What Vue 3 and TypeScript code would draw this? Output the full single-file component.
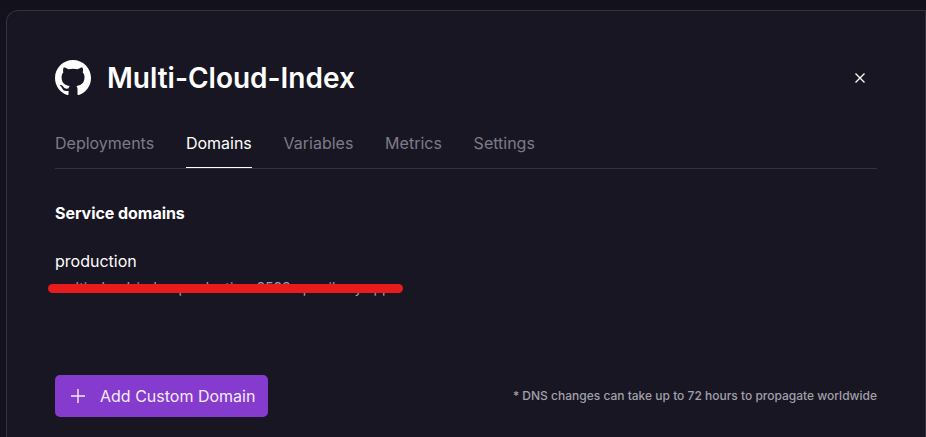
<script setup lang="ts">
import { ref } from 'vue'

const tabs: string[] = ['Deployments', 'Domains', 'Variables', 'Metrics', 'Settings']
const activeTab = ref('Domains')
const domain = 'multi-cloud-index-production-8523.up.railway.app'
</script>

<template>
  <main class="panel">
    <header class="header">
      <svg class="logo" viewBox="0 0 16 16" aria-hidden="true">
        <path fill="currentColor" fill-rule="evenodd" d="M8 0C3.58 0 0 3.58 0 8c0 3.54 2.29 6.53 5.47 7.59.4.07.55-.17.55-.38 0-.19-.01-.82-.01-1.49-2.01.37-2.53-.49-2.69-.94-.09-.23-.48-.94-.82-1.13-.28-.15-.68-.52-.01-.53.63-.01 1.08.58 1.23.82.72 1.21 1.87.87 2.33.66.07-.52.28-.87.51-1.07-1.78-.2-3.64-.89-3.64-3.95 0-.87.31-1.59.82-2.15-.08-.2-.36-1.02.08-2.12 0 0 .67-.21 2.2.82.64-.18 1.32-.27 2-.27s1.36.09 2 .27c1.53-1.04 2.2-.82 2.2-.82.44 1.1.16 1.92.08 2.12.51.56.82 1.27.82 2.15 0 3.07-1.87 3.75-3.65 3.95.29.25.54.73.54 1.48 0 1.07-.01 1.93-.01 2.2 0 .21.15.46.55.38A8.01 8.01 0 0 0 16 8c0-4.42-3.58-8-8-8z" />
      </svg>
      <h1>Multi-Cloud-Index</h1>
      <button class="close" aria-label="Close">
        <svg viewBox="0 0 10 10"><path d="M.5.5l9 9M9.5.5l-9 9" /></svg>
      </button>
    </header>

    <nav class="tabs">
      <button
        v-for="tab in tabs"
        :key="tab"
        class="tab"
        :class="{ active: tab === activeTab }"
        @click="activeTab = tab"
      >{{ tab }}</button>
    </nav>

    <h2>Service domains</h2>
    <p class="environment">production</p>
    <div class="domain">
      <span>{{ domain }}</span>
      <i class="redaction"></i>
    </div>

    <footer class="footer">
      <button class="add">
        <svg viewBox="0 0 14 14"><path d="M7 0v14M0 7h14" /></svg>
        <span>Add Custom Domain</span>
      </button>
      <p class="note">* DNS changes can take up to 72 hours to propagate worldwide</p>
    </footer>
  </main>
</template>

<style>
body {
  background: #13111c;
}
</style>

<style scoped>
.panel {
  box-sizing: border-box;
  width: 920px;
  height: 427px;
  margin: 10px 0 0 6px;
  padding: 47px 48px 0;
  border: 1px solid #33323e;
  border-bottom: 0;
  border-radius: 12px 0 0 0;
  background: #181622;
  color: #fff;
  font-family: Inter, "Liberation Sans", sans-serif;
  font-size: 16px;
  line-height: 24px;
}
h1, h2, p {
  margin: 0;
}
button {
  padding: 0;
  border: 0;
  background: none;
  color: inherit;
  font: inherit;
}
.header {
  display: flex;
  align-items: center;
  height: 40px;
}
.logo {
  width: 36px;
  height: 36px;
}
h1 {
  margin-left: 16px;
  font-size: 28px;
  line-height: 40px;
  font-weight: 600;
}
.close {
  display: flex;
  margin-left: auto;
  margin-right: 12px;
}
.close svg {
  width: 10px;
  height: 10px;
  fill: none;
  stroke: currentColor;
  stroke-width: 1.3;
}
.tabs {
  display: flex;
  gap: 31.75px;
  height: 37px;
  margin-top: 33px;
  border-bottom: 1px solid #33323e;
}
.tab {
  display: block;
  height: 37px;
  padding-bottom: 12px;
  box-sizing: border-box;
  border-bottom: 1px solid transparent;
  color: #7d7b88;
}
.tab.active {
  border-bottom-color: #fff;
  color: #fff;
}
h2 {
  margin-top: 32px;
  font-size: 16px;
  line-height: 24px;
  font-weight: 700;
  letter-spacing: -0.05px;
}
.environment {
  margin-top: 24px;
}
.domain {
  position: relative;
  color: #a1a0ab;
  font-size: 14px;
  line-height: 20px;
  margin-top: 5px;
}
.redaction {
  position: absolute;
  left: -7px;
  top: 6.3px;
  width: 355px;
  height: 9px;
  border-radius: 5px;
  background: #e81c1c;
}
.footer {
  display: flex;
  align-items: center;
  justify-content: space-between;
  margin-top: 77px;
}
.add {
  display: flex;
  align-items: center;
  width: 213px;
  height: 42px;
  padding-left: 16px;
  border-radius: 5px;
  background: #853bce;
  color: #f3ebfa;
  white-space: nowrap;
}
.add svg {
  width: 14px;
  height: 14px;
  margin-right: 15px;
  fill: none;
  stroke: currentColor;
  stroke-width: 1.4;
}
.note {
  color: #a1a0ab;
  font-size: 12px;
  line-height: 16px;
  font-weight: 500;
}
</style>
